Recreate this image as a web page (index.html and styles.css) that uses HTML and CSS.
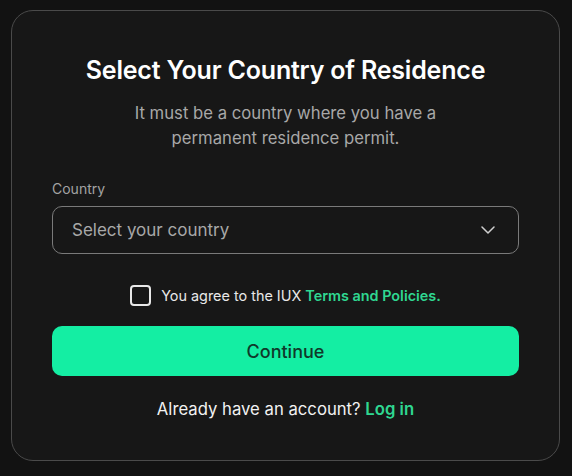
FILE: index.html
```html
<!DOCTYPE html>
<html>
<head>
<meta charset="utf-8">
<link rel="stylesheet" href="styles.css">
</head>
<body>
<div class="card">
  <h1 class="title">Select Your Country of Residence</h1>
  <p class="subtitle">It must be a country where you have a<br>permanent residence permit.</p>
  <div class="field">
    <label class="label">Country</label>
    <div class="select">
      <span class="placeholder">Select your country</span>
      <svg class="chevron" width="14" height="8" viewBox="0 0 14 8"><path d="M1 1 L7 7 L13 1" fill="none" stroke="#cfcfcf" stroke-width="1.5" stroke-linecap="round" stroke-linejoin="round"/></svg>
    </div>
  </div>
  <div class="agree">
    <span class="checkbox"></span>
    <span class="agree-text">You agree to the IUX <b class="link">Terms and Policies.</b></span>
  </div>
  <button class="btn">Continue</button>
  <p class="login">Already have an account? <b class="link">Log in</b></p>
</div>
</body>
</html>
```
FILE: styles.css
```css
html, body {
  margin: 0;
  padding: 0;
  background: #121212;
}
body {
  font-family: "Inter", "Noto Sans", sans-serif;
  padding: 10px 12px 15px 11px;
  width: 572px;
  height: 476px;
  box-sizing: border-box;
}
.card {
  box-sizing: border-box;
  width: 549px;
  height: 451px;
  border: 1px solid #4a4a4a;
  border-radius: 22px;
  background: #171717;
  display: flex;
  flex-direction: column;
  align-items: center;
  padding: 43px 40px 0 40px;
}
.title {
  margin: 0;
  color: #ffffff;
  font-size: 25px;
  font-weight: 600;
  letter-spacing: -0.2px;
  line-height: 32px;
}
.subtitle {
  margin: 15px 0 0 0;
  color: #a8a8a8;
  font-size: 16.7px;
  line-height: 25px;
  text-align: center;
  font-weight: 400;
}
.field {
  align-self: stretch;
  margin-top: 29px;
  display: flex;
  flex-direction: column;
}
.label {
  color: #a3a3a3;
  font-size: 14px;
  line-height: 18px;
}
.select {
  margin-top: 8px;
  height: 48px;
  box-sizing: border-box;
  border: 1px solid #7a7a7a;
  border-radius: 10px;
  display: flex;
  align-items: center;
  justify-content: space-between;
  padding: 0 23px 0 19px;
}
.placeholder {
  color: #a8a8a8;
  font-size: 17px;
}
.agree {
  margin-top: 31px;
  display: flex;
  align-items: center;
  gap: 10px;
}
.checkbox {
  width: 17px;
  height: 17px;
  border: 2px solid #e8e8e8;
  border-radius: 4px;
}
.agree-text {
  color: #e8e8e8;
  font-size: 14.4px;
}
.link {
  color: #2fd791;
  font-weight: 600;
}
.btn {
  margin-top: 20px;
  align-self: stretch;
  height: 50px;
  border: none;
  border-radius: 10px;
  background: #14eea3;
  color: #10392a;
  font-family: inherit;
  font-size: 18px;
  font-weight: 500;
}
.login {
  margin: 22px 0 0 0;
  color: #f2f2f2;
  font-size: 16.7px;
  line-height: 22px;
}
```
